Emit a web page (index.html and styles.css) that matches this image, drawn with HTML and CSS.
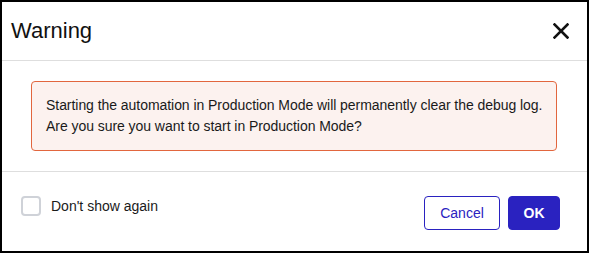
FILE: index.html
```html
<!DOCTYPE html>
<html lang="en">
<head>
<meta charset="utf-8">
<title>Warning</title>
<link rel="stylesheet" href="styles.css">
</head>
<body>
<div class="dialog">
  <div class="header">
    <div class="title">Warning</div>
    <button class="close" aria-label="Close">
      <svg width="16" height="16" viewBox="0 0 16 16"><path d="M1.5 1.5 L14.5 14.5 M14.5 1.5 L1.5 14.5" stroke="#111" stroke-width="2.6" stroke-linecap="square" fill="none"/></svg>
    </button>
  </div>
  <div class="body">
    <div class="alert"><span class="line">Starting the automation in Production Mode will permanently clear the debug log.</span><span class="line">Are you sure you want to start in Production Mode?</span></div>
  </div>
  <div class="footer">
    <label class="check"><span class="box"></span><span class="label">Don't show again</span></label>
    <div class="actions">
      <button class="btn btn-outline">Cancel</button>
      <button class="btn btn-primary">OK</button>
    </div>
  </div>
</div>
</body>
</html>
```
FILE: styles.css
```css
* { box-sizing: border-box; }
body { margin: 0; background: #fff; font-family: "Liberation Sans", Arial, sans-serif; color: #1a1a1a; }
.dialog {
  width: 589px; height: 253px;
  border: 2px solid #000;
  display: flex; flex-direction: column;
  background: #fff;
}
.header {
  height: 59px;
  border-bottom: 1px solid #dedede;
  display: flex; align-items: center; justify-content: space-between;
  padding: 0 18px 0 9px;
}
.title { font-size: 22px; font-weight: 400; color: #111; }
.close { border: 0; background: none; padding: 0; width: 16px; height: 16px; display: flex; cursor: pointer; }
.body { padding: 20px 30px 20px 29px; border-bottom: 1px solid #dedede; }
.alert {
  height: 70px;
  background: #fcf2ef;
  border: 1px solid #e2663e;
  border-radius: 4px;
  padding: 13px 14px;
  font-size: 14px; line-height: 21px; letter-spacing: -0.05px;
  color: #1a1a1a;
  white-space: nowrap;
}
.line { display: block; }
.footer {
  flex: 1;
  display: flex; justify-content: space-between; align-items: flex-start;
  padding: 24px 27px 0 19px;
}
.check { display: flex; align-items: center; gap: 10px; cursor: pointer; }
.box { width: 20px; height: 20px; border: 2px solid #cfd2d8; border-radius: 4px; }
.label { font-size: 14px; color: #1a1a1a; }
.actions { display: flex; gap: 8px; }
.btn {
  height: 34px; border-radius: 4px; font-family: inherit; font-size: 14px;
  cursor: pointer;
}
.btn-outline { width: 76px; background: #fff; border: 1px solid #2a22c0; color: #2a22c0; }
.btn-primary { width: 52px; background: #2a22c0; border: 1px solid #2a22c0; color: #fff; font-weight: 700; }
```
